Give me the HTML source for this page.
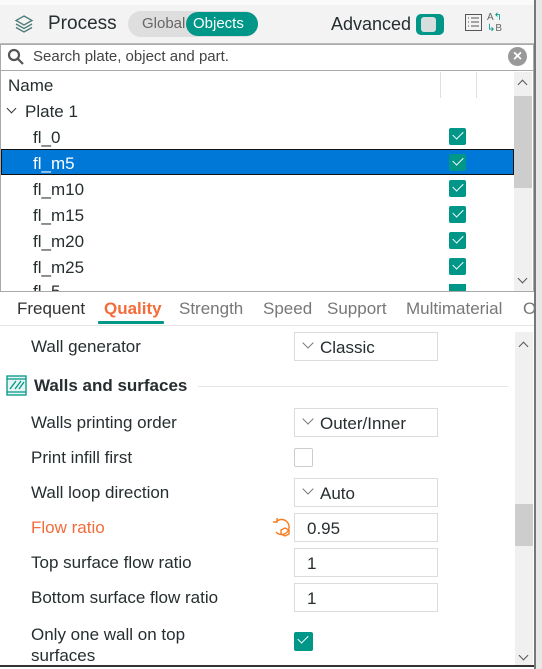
<!DOCTYPE html>
<html><head><style>
*{box-sizing:border-box;margin:0;padding:0}
body{width:542px;height:669px;overflow:hidden;background:#fff;font-family:"Liberation Sans","DejaVu Sans",sans-serif;color:#262e30;position:relative}
.a{position:absolute}
.t{font-size:17px;white-space:nowrap}
.cb{position:absolute;width:17px;height:17px;background:#009688;border-radius:2px}
.cb:after{content:"";position:absolute;left:4px;top:3px;width:9px;height:5px;border-left:1.5px solid #fff;border-bottom:1.5px solid #fff;transform:rotate(-45deg)}
.inp{position:absolute;left:294px;width:144px;height:29px;border:1px solid #dcdcdc;font-size:17px;padding:5px 0 0 12px}
.lbl{position:absolute;left:31px;font-size:17px}
.dd:before{content:"";position:absolute;left:9px;top:6px;width:7px;height:7px;border-right:1px solid #777;border-bottom:1px solid #777;transform:rotate(45deg)}
.dd{padding-left:25px}
</style></head><body>
<div class="a" style="left:0;top:0;width:542px;height:44px;background:#f3f3f3;border-bottom:1px solid #bbb"></div>
<div class="a" style="left:0;top:0;width:542px;height:5px;background:#fafafa"></div>
<svg class="a" style="left:13px;top:13px" width="22" height="22" viewBox="0 0 22 22" fill="none" stroke="#4b7b78" stroke-width="1.3"><path d="M11 3 L19 7.5 L11 12 L3 7.5Z"/><path d="M3 11 L11 15.5 L19 11"/><path d="M3 14.5 L11 19 L19 14.5"/></svg>
<div class="a t" style="left:48px;top:13px;font-size:19px">Process</div>
<div class="a" style="left:128px;top:11px;width:130px;height:26px;border-radius:13px;background:#dedede"></div>
<div class="a t" style="left:142px;top:15px;font-size:15px;color:#666">Global</div>
<div class="a" style="left:186px;top:12px;width:72px;height:24px;border-radius:12px;background:#009688"></div>
<div class="a t" style="left:193px;top:15px;font-size:15px;color:#fff">Objects</div>
<div class="a t" style="left:331px;top:14px;font-size:18px">Advanced</div>
<div class="a" style="left:416px;top:14px;width:28px;height:21px;border-radius:5px;background:#009688"></div>
<div class="a" style="left:421px;top:17px;width:15px;height:15px;border-radius:3px;background:#d6dfde"></div>
<svg class="a" style="left:464px;top:13px" width="20" height="20" fill="none" stroke="#555" stroke-width="1"><rect x="1.5" y="1.5" width="16" height="16"/><path d="M4 5h1M7 5h8M4 9h1M7 9h8M4 13h1M7 13h8"/></svg>
<div class="a" style="left:487px;top:12px;font-size:10px;color:#666;line-height:11px">A<span style="color:#009688">↰</span><br><span style="color:#009688">↳</span>B</div>
<div class="a" style="left:0;top:44px;width:534px;height:27px;border:1px solid #aaa;background:#fff"></div>
<svg class="a" style="left:7px;top:48px" width="18" height="18" fill="none" stroke="#555" stroke-width="2.2"><circle cx="7" cy="7" r="5"/><path d="M11 11 L16 16"/></svg>
<div class="a t" style="left:33px;top:48px;font-size:15px;color:#444">Search plate, object and part.</div>
<div class="a" style="left:508px;top:47px;width:19px;height:19px;border-radius:50%;background:#999;color:#fff;font-size:16px;line-height:19px;text-align:center;font-weight:bold">×</div>
<div class="a" style="left:0;top:71px;width:534px;height:221px;border:1px solid #aaa;border-top:none;background:#fff"></div>
<div class="a" style="left:440px;top:72px;width:1px;height:26px;background:#e0e0e0"></div>
<div class="a" style="left:476px;top:72px;width:1px;height:26px;background:#e0e0e0"></div>
<div class="a t" style="left:8px;top:76px">Name</div>
<div class="a" style="left:514px;top:72px;width:18px;height:219px;background:#f0f0f0"></div>
<div class="a" style="left:514px;top:96px;width:18px;height:92px;background:#cdcdcd"></div>
<div class="a" style="left:519px;top:81px;width:7px;height:7px;border-left:1.5px solid #555;border-top:1.5px solid #555;transform:rotate(45deg)"></div>
<div class="a" style="left:519px;top:275px;width:7px;height:7px;border-right:1.5px solid #555;border-bottom:1.5px solid #555;transform:rotate(45deg)"></div>
<div class="a" style="left:8px;top:105px;width:7px;height:7px;border-right:1.5px solid #333;border-bottom:1.5px solid #333;transform:rotate(45deg)"></div>
<div class="a t" style="left:25px;top:102px">Plate 1</div>
<div class="a" style="left:1px;top:149px;width:513px;height:26px;background:#0078d7;border:1px solid #111"></div>
<div class="a t" style="left:33px;top:128px">fl_0</div>
<div class="a t" style="left:33px;top:154px;color:#fff">fl_m5</div>
<div class="a t" style="left:33px;top:180px">fl_m10</div>
<div class="a t" style="left:33px;top:206px">fl_m15</div>
<div class="a t" style="left:33px;top:232px">fl_m20</div>
<div class="a t" style="left:33px;top:258px">fl_m25</div>
<div class="a" style="left:33px;top:282px;height:9px;overflow:hidden;font-size:17px">fl_5</div>
<div class="cb" style="left:449px;top:128px"></div>
<div class="cb" style="left:449px;top:154px"></div>
<div class="cb" style="left:449px;top:180px"></div>
<div class="cb" style="left:449px;top:206px"></div>
<div class="cb" style="left:449px;top:232px"></div>
<div class="cb" style="left:449px;top:258px"></div>
<div class="a" style="left:449px;top:284px;width:17px;height:7px;background:#009688"></div>
<div class="a" style="left:0;top:292px;width:534px;height:34px;background:#fff;border-bottom:1px solid #e4e4e4"></div>
<div class="a t" style="left:17px;top:299px;color:#333">Frequent</div>
<div class="a t" style="left:104px;top:299px;color:#f36c3a;font-weight:bold">Quality</div>
<div class="a" style="left:98px;top:321px;width:66px;height:3px;background:#009688;border-radius:1px"></div>
<div class="a t" style="left:179px;top:299px;color:#777">Strength</div>
<div class="a t" style="left:263px;top:299px;color:#777">Speed</div>
<div class="a t" style="left:327px;top:299px;color:#777">Support</div>
<div class="a t" style="left:406px;top:299px;color:#777">Multimaterial</div>
<div class="a t" style="left:523px;top:299px;color:#777;width:11px;overflow:hidden">O</div>
<div class="a" style="left:515px;top:332px;width:18px;height:337px;background:#f0f0f0"></div>
<div class="a" style="left:515px;top:504px;width:18px;height:42px;background:#cdcdcd"></div>
<div class="a" style="left:520px;top:343px;width:7px;height:7px;border-left:1.5px solid #555;border-top:1.5px solid #555;transform:rotate(45deg)"></div>
<div class="a" style="left:520px;top:652px;width:7px;height:7px;border-right:1.5px solid #555;border-bottom:1.5px solid #555;transform:rotate(45deg)"></div>
<div class="a" style="left:534px;top:0;width:8px;height:669px;background:#e8e8e8;border-left:2px solid #777"></div>
<div class="a" style="left:0;top:665px;width:534px;height:4px;background:#fff;border-top:2px solid #333"></div>
<div class="lbl" style="top:337px">Wall generator</div>
<div class="inp dd" style="top:332px">Classic</div>
<svg class="a" style="left:6px;top:375px" width="21" height="21" fill="none" stroke="#009688" stroke-width="1.3"><rect x="1" y="1" width="19" height="19" fill="#e6f4f2"/><path d="M1 4h19M1 17h19M4 14l6-8M9 14l6-8M13 14l5-7"/></svg>
<div class="a t" style="left:34px;top:376px;font-weight:bold">Walls and surfaces</div>
<div class="a" style="left:198px;top:386px;width:310px;height:1px;background:#e6e6e6"></div>
<div class="lbl" style="top:413px">Walls printing order</div>
<div class="inp dd" style="top:408px">Outer/Inner</div>
<div class="lbl" style="top:448px">Print infill first</div>
<div class="a" style="left:294px;top:448px;width:19px;height:19px;border:1px solid #ccc;border-radius:2px"></div>
<div class="lbl" style="top:483px">Wall loop direction</div>
<div class="inp dd" style="top:478px">Auto</div>
<div class="lbl" style="top:518px;color:#f36c3a">Flow ratio</div>
<svg class="a" style="left:271px;top:516px" width="22" height="22" fill="none" stroke="#f57c20" stroke-width="1.4"><path d="M5 6 A7.5 7.5 0 1 1 5 16"/><path d="M2 6h4V2"/><path d="M14 12l4 2v4l-4 2-4-2v-4z"/></svg>
<div class="inp" style="top:513px">0.95</div>
<div class="lbl" style="top:553px">Top surface flow ratio</div>
<div class="inp" style="top:548px">1</div>
<div class="lbl" style="top:588px">Bottom surface flow ratio</div>
<div class="inp" style="top:583px">1</div>
<div class="lbl" style="top:624px;line-height:21px">Only one wall on top<br>surfaces</div>
<div class="cb" style="left:294px;top:632px;width:19px;height:19px"></div>
</body></html>
